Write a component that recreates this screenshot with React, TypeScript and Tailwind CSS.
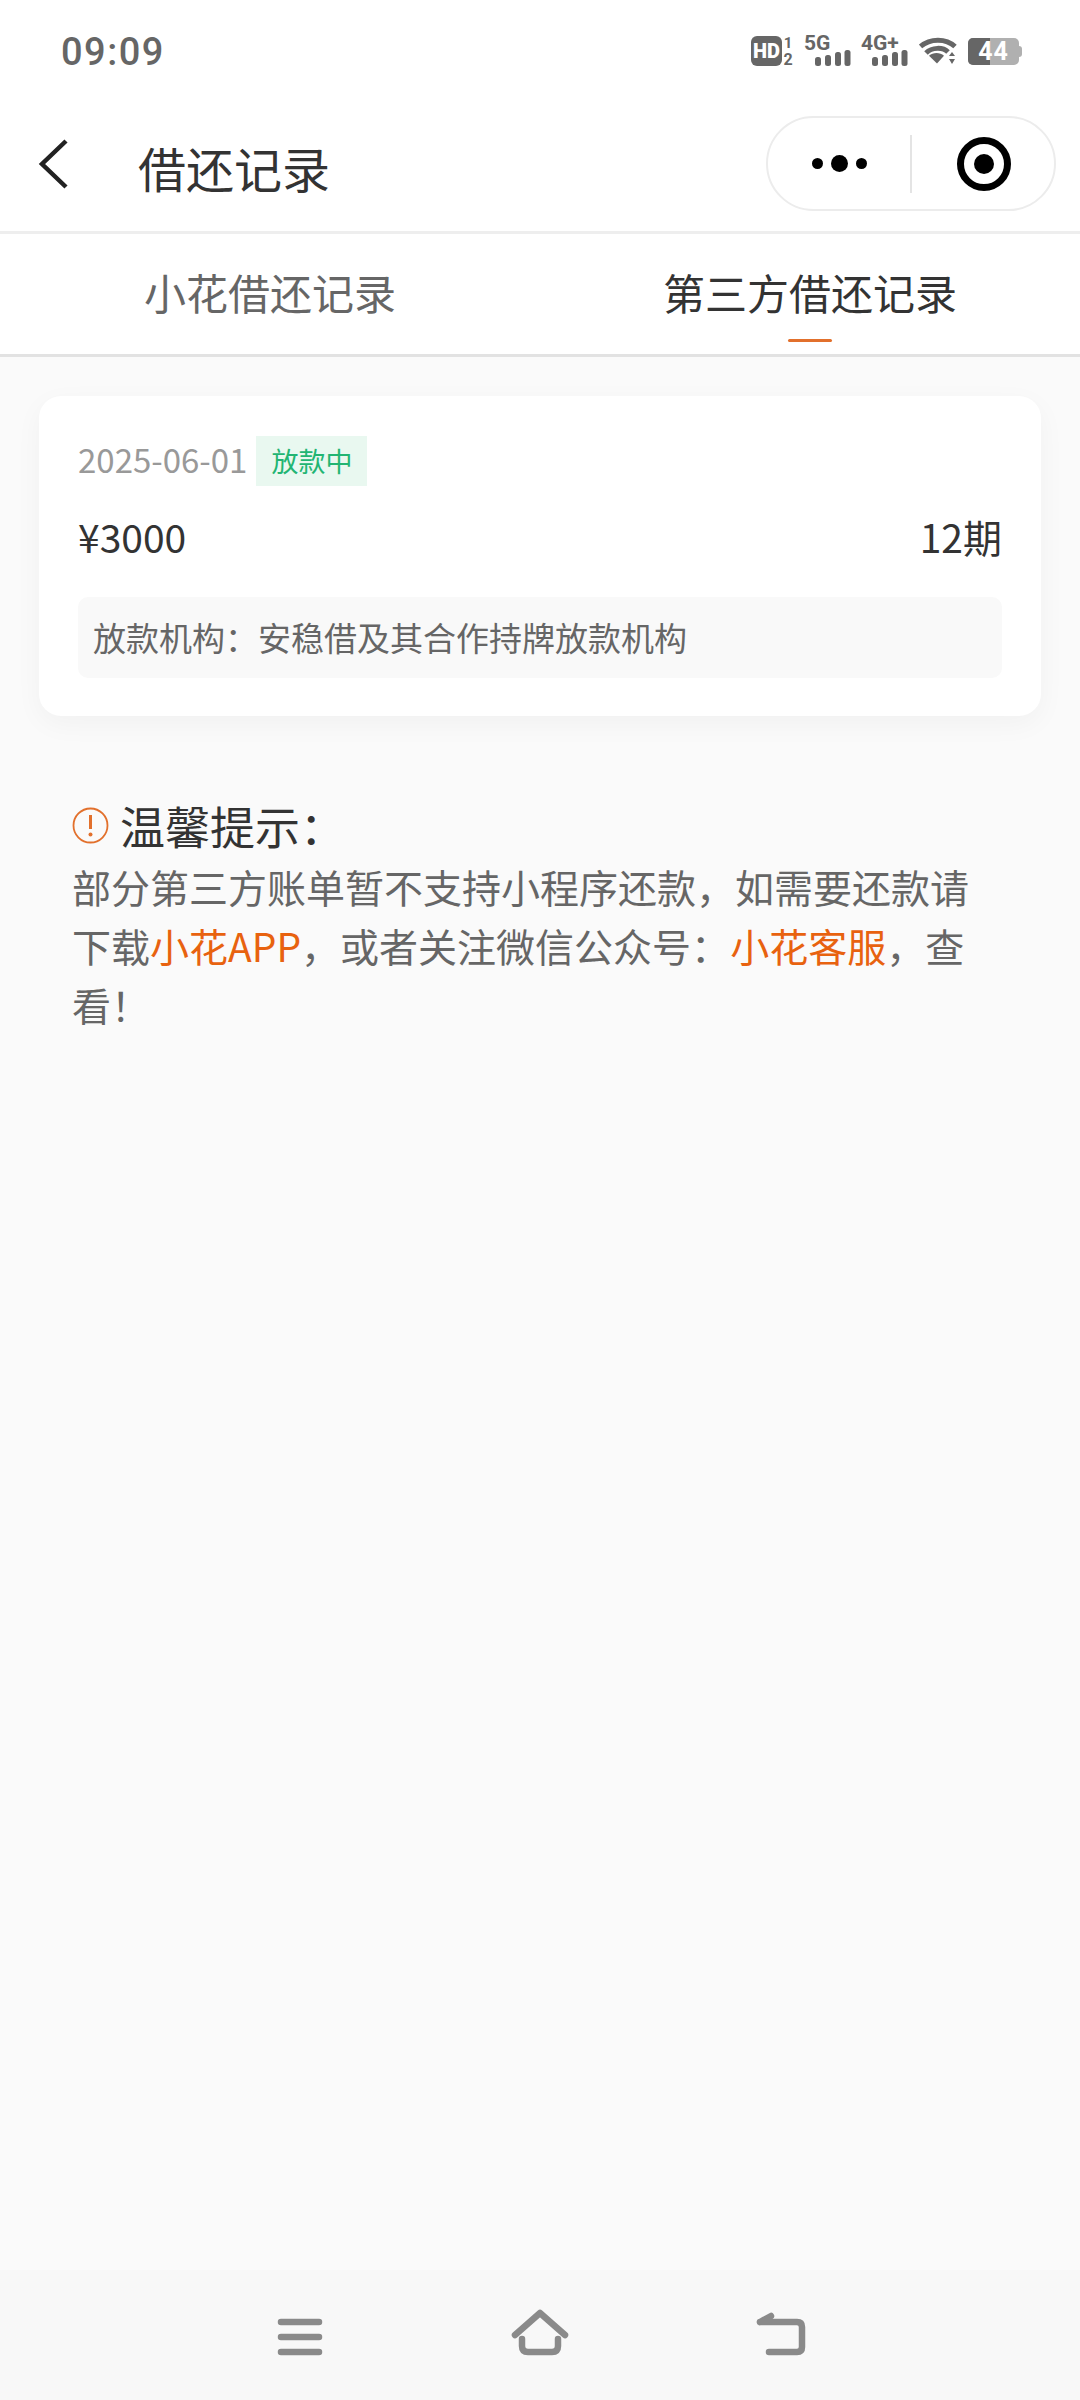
const cjk = 'font-["Noto_Sans_CJK_SC",sans-serif]';

function StatusIcons() {
  return (
    <div className="flex items-center">
      {/* HD badge */}
      <svg width="44" height="32" viewBox="0 0 44 32" className="overflow-visible fill-[#666]">
        <rect x="0" y="1" width="31" height="30" rx="6" />
        <text x="15.5" y="23" textAnchor="middle" fontSize="20" fontWeight="900" fill="#fff" fontFamily="Roboto, sans-serif">HD</text>
        <text x="37" y="13" textAnchor="middle" fontSize="15" fontWeight="700" fontFamily="Roboto, sans-serif">1</text>
        <text x="37" y="30" textAnchor="middle" fontSize="16" fontWeight="700" fontFamily="Roboto, sans-serif">2</text>
      </svg>
      <Signal label="5G" className="ml-[10px]" />
      <Signal label="4G+" className="ml-[11px]" />
      {/* wifi */}
      <svg width="38" height="32" viewBox="0 0 38 32" className="ml-[11px]">
        <path d="M1.5 11.5 C11 3 27 3 36 11.5" fill="none" stroke="#666" strokeWidth="5" />
        <path d="M7 18 C13 12 24 12 29 17" fill="none" stroke="#666" strokeWidth="5" />
        <path d="M10 23 L18 31 L25 23 C21 19 14 19 10 23 Z" fill="#666" transform="translate(0 -1) scale(1 0.95)" />
        <path d="M30 21 L33 17 L36 21 Z M30 24 L36 24 L33 29 Z" fill="#666" />
      </svg>
      {/* battery */}
      <div className="relative ml-[11px] flex h-[27px] w-[51px] items-center justify-center overflow-hidden rounded-[5px] bg-[#b0b0b0]">
        <div className="absolute inset-y-0 left-0 w-[22px] bg-[#666]" />
        <span className="relative font-['Roboto',sans-serif] text-[25px] leading-[27px] font-bold tracking-[1px] text-white">44</span>
      </div>
      <div className="h-[11px] w-[3px] rounded-r-sm bg-[#b0b0b0]" />
    </div>
  );
}

function Signal({ label, className }: { label: string; className: string }) {
  return (
    <svg width="46" height="32" viewBox="0 0 46 32" className={`overflow-visible ${className}`}>
      <text x="-1" y="15" fontSize="21" fontWeight="700" fill="#666" fontFamily="Roboto, sans-serif">{label}</text>
      <rect x="10" y="22" width="6" height="9" rx="2.5" fill="#666" />
      <rect x="20" y="20" width="6" height="11" rx="2.5" fill="#666" />
      <rect x="30" y="17" width="6" height="14" rx="2.5" fill="#666" />
      <rect x="39.5" y="15" width="6" height="16" rx="2.5" fill="#666" />
    </svg>
  );
}

export default function App() {
  return (
    <div className={`flex h-[2400px] w-[1080px] flex-col overflow-hidden bg-[#fafafa] ${cjk}`}>
      {/* Status bar */}
      <div className="flex h-[110px] items-start justify-between bg-white pt-[33px] pr-[58px] pl-[61px]">
        <span className="font-['Roboto',sans-serif] text-[38px] leading-[38px] font-medium tracking-[1.5px] text-[#666]">09:09</span>
        <div className="pt-[2px]"><StatusIcons /></div>
      </div>

      {/* Header */}
      <div className="flex h-[124px] items-center border-b-[3px] border-[#eeeeee] bg-white pr-[24px] pb-[14px]">
        <svg width="30" height="52" viewBox="0 0 30 52" fill="none" className="ml-[38px] shrink-0">
          <path d="M28 3 L4 26 L28 49" stroke="#222" strokeWidth="4.5" />
        </svg>
        <h1 className="ml-[70px] pt-[6px] text-[48px] leading-none font-normal text-[#333]">借还记录</h1>
        <div className="ml-auto flex h-[95px] w-[290px] items-center rounded-full border-[2px] border-[#ececec]">
          <div className="flex w-[142px] items-center justify-center gap-[8px]">
            <span className="h-[11px] w-[11px] rounded-full bg-black" />
            <span className="h-[17px] w-[17px] rounded-full bg-black" />
            <span className="h-[11px] w-[11px] rounded-full bg-black" />
          </div>
          <div className="h-[58px] w-[2px] bg-[#e4e4e4]" />
          <div className="flex flex-1 items-center justify-center pl-[2px]">
            <div className="flex h-[54px] w-[54px] items-center justify-center rounded-full border-[7px] border-black">
              <span className="h-[20px] w-[20px] rounded-full bg-black" />
            </div>
          </div>
        </div>
      </div>

      {/* Tabs */}
      <div className="flex h-[123px] border-b-[3px] border-[#e2e2e2] bg-white">
        <div className="flex w-[540px] items-center justify-center pb-[5px] text-[42px] text-[#666]">小花借还记录</div>
        <div className="relative flex w-[540px] items-center justify-center pb-[5px] text-[42px] text-[#333]">
          第三方借还记录
          <div className="absolute bottom-[12px] left-1/2 h-[3px] w-[44px] -translate-x-1/2 rounded-full bg-[#e2702c]" />
        </div>
      </div>

      {/* Record card */}
      <div className="mx-[39px] mt-[39px] h-[320px] shrink-0 rounded-[22px] bg-white px-[39px] pt-[40px] shadow-[0_8px_28px_rgba(0,0,0,0.04)]">
        <div className="flex items-center">
          <span className="pb-[3px] text-[33px] leading-[47px] text-[#999]">2025-06-01</span>
          <span className="ml-[9px] flex h-[50px] w-[111px] items-center justify-center bg-[#e9f8f0] text-[27px] text-[#22b573]">放款中</span>
        </div>
        <div className="mt-[25px] flex items-center justify-between text-[39px] leading-[50px] text-[#333]">
          <span>¥3000</span>
          <span>12期</span>
        </div>
        <div className="mt-[36px] flex h-[81px] items-center rounded-[10px] bg-[#f9f9f9] px-[15px] text-[33px] text-[#666]">
          放款机构&#xFF1A;安稳借及其合作持牌放款机构
        </div>
      </div>

      {/* Tips */}
      <div className="mt-[78px] w-[1008px] pr-[16px] pl-[72px]">
        <div className="flex h-[63px] items-center">
          <svg width="37" height="37" viewBox="0 0 37 37" fill="none" className="shrink-0">
            <circle cx="18.5" cy="18.5" r="17" stroke="#e2702c" strokeWidth="1.8" />
            <path d="M18.5 8 V22" stroke="#e2702c" strokeWidth="3" />
            <circle cx="18.5" cy="27.5" r="2" fill="#e2702c" />
          </svg>
          <span className="ml-[11px] text-[45px] leading-none text-[#333]">温馨提示&#xFF1A;</span>
        </div>
        <p className="text-[39px] leading-[59px] text-[#666]">
          部分第三方账单暂不支持小程序还款&#xFF0C;如需要还款请下载<span className="text-[#e8620f]">小花APP</span>&#xFF0C;或者关注微信公众号&#xFF1A;<span className="text-[#e8620f]">小花客服</span>&#xFF0C;查看&#xFF01;
        </p>
      </div>

      {/* Navigation bar */}
      <div className="mt-auto flex h-[130px] items-start bg-[#f8f8f8] pt-[30px]">
        <svg width="1080" height="60" viewBox="0 2300 1080 60" fill="none" stroke="#8a8a8a" strokeWidth="6.5" strokeLinecap="round" strokeLinejoin="round">
          <path d="M281 2322 H319 M281 2337 H319 M281 2352 H319" />
          <path d="M515 2335 L540 2313 L565 2335" />
          <path d="M522 2339 V2346 Q522 2352 528 2352 H552 Q558 2352 558 2346 V2339" />
          <path d="M760 2322 L771 2316 M760 2322 H797 Q802 2322 802 2327 V2347 Q802 2352 797 2352 H769" />
        </svg>
      </div>
    </div>
  );
}
